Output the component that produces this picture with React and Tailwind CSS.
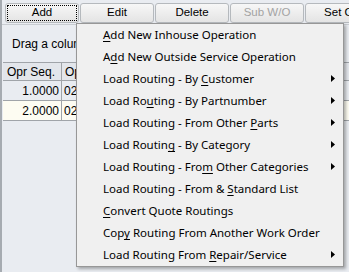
import React from "react";

const menuItems = [
  { pre: "", key: "A", post: "dd New Inhouse Operation" },
  { pre: "A", key: "d", post: "d New Outside Service Operation" },
  { pre: "Load Routing - By ", key: "C", post: "ustomer", sub: true },
  { pre: "Load Ro", key: "u", post: "ting - By Partnumber", sub: true },
  { pre: "Load Routing - From Other ", key: "P", post: "arts", sub: true },
  { pre: "Load Routin", key: "g", post: " - By Category", sub: true },
  { pre: "Load Routing - Fro", key: "m", post: " Other Categories", sub: true },
  { pre: "Load Routing - From & ", key: "S", post: "tandard List" },
  { pre: "", key: "C", post: "onvert Quote Routings" },
  { pre: "Cop", key: "y", post: " Routing From Another Work Order" },
  { pre: "Load Routing From ", key: "R", post: "epair/Service", sub: true },
];

const buttons = [
  { label: "Add", focus: true },
  { label: "Edit" },
  { label: "Delete" },
  { label: "Sub W/O", disabled: true },
  { label: "Set Op" },
];

const ToolButton = ({ label, focus, disabled }) => (
  <div className="w-[74px] h-[20px] shrink-0 rounded-[3px] border border-[#b5b9bd] bg-gradient-to-b from-[#f7f7f7] to-[#e4e4e4] p-[1px]">
    <div
      className={
        "h-full flex items-center justify-center text-[11.5px] leading-none " +
        (focus ? "border border-dotted border-black " : "") +
        (disabled ? "text-[#a3a3a3]" : "text-black")
      }
    >
      {label}
    </div>
  </div>
);

const App = () => {
  return (
    <div
      className="relative w-[349px] h-[272px] overflow-hidden bg-[#e9ecf1] border-l-2 border-[#a6abb1]"
      style={{ fontFamily: "'Liberation Sans', Arial, sans-serif" }}
    >
      {/* toolbar */}
      <div className="flex gap-[1px] pl-[3px] pt-[3px] h-[25px] border-b border-[#c9cdd2]">
        {buttons.map((b) => (
          <ToolButton key={b.label} {...b} />
        ))}
      </div>

      {/* group-by panel */}
      <div className="ml-[1px] h-[37px] flex items-center pl-[9px] text-[12px] text-black">
        Drag a column header here to group by that column
      </div>

      {/* grid */}
      <div className="ml-[1px] border-t border-[#a0a4a9]">
        <div className="flex h-[18px] bg-[#e3e6eb] border-b border-[#a0a4a9] text-[12px]">
          <div className="w-[59px] pl-[4px] flex items-center border-r border-[#a0a4a9]">Opr Seq.</div>
          <div className="flex-1 pl-[3px] flex items-center">Opr Code</div>
        </div>
        {["1.0000", "2.0000"].map((v, i) => (
          <div
            key={v}
            className={
              "flex h-[20px] border-b border-[#a0a4a9] text-[12px] " +
              (i === 1 ? "bg-[#fdfcf2]" : "bg-[#e9ecf1]")
            }
          >
            <div className="w-[59px] pr-[2px] flex items-center justify-end border-r border-[#a0a4a9]">{v}</div>
            <div className="flex-1 pl-[2px] flex items-center">02</div>
          </div>
        ))}
      </div>

      {/* context menu */}
      <div
        className="absolute left-[74px] top-[23px] w-[268px] bg-[#f0f0f0] border border-[#979797] shadow-[2px_2px_3px_rgba(0,0,0,0.3)]"
        style={{ fontFamily: "'Noto Sans', 'Open Sans', sans-serif" }}
      >
        {menuItems.map((m, i) => (
          <div key={i} className="relative h-[22px] flex items-center pl-[26px] text-[11.5px] text-black whitespace-nowrap">
            <span>
              {m.pre}
              <span className="underline underline-offset-2">{m.key}</span>
              {m.post}
            </span>
            {m.sub && (
              <svg className="absolute right-[8px] top-[7px]" width="4" height="7" viewBox="0 0 4 7">
                <path d="M0 0 L4 3.5 L0 7 Z" fill="#000" />
              </svg>
            )}
          </div>
        ))}
      </div>
    </div>
  );
};

export default App;
